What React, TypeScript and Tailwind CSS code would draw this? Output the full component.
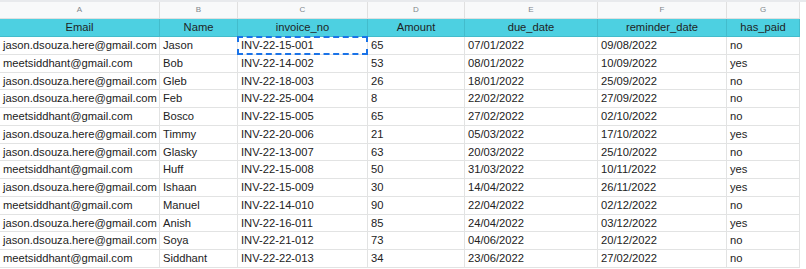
const columns = [
  { letter: 'A', title: 'Email' },
  { letter: 'B', title: 'Name' },
  { letter: 'C', title: 'invoice_no' },
  { letter: 'D', title: 'Amount' },
  { letter: 'E', title: 'due_date' },
  { letter: 'F', title: 'reminder_date' },
  { letter: 'G', title: 'has_paid' },
];

const rows = [
  ['jason.dsouza.here@gmail.com', 'Jason', 'INV-22-15-001', '65', '07/01/2022', '09/08/2022', 'no'],
  ['meetsiddhant@gmail.com', 'Bob', 'INV-22-14-002', '53', '08/01/2022', '10/09/2022', 'yes'],
  ['jason.dsouza.here@gmail.com', 'Gleb', 'INV-22-18-003', '26', '18/01/2022', '25/09/2022', 'no'],
  ['jason.dsouza.here@gmail.com', 'Feb', 'INV-22-25-004', '8', '22/02/2022', '27/09/2022', 'no'],
  ['meetsiddhant@gmail.com', 'Bosco', 'INV-22-15-005', '65', '27/02/2022', '02/10/2022', 'no'],
  ['jason.dsouza.here@gmail.com', 'Timmy', 'INV-22-20-006', '21', '05/03/2022', '17/10/2022', 'yes'],
  ['jason.dsouza.here@gmail.com', 'Glasky', 'INV-22-13-007', '63', '20/03/2022', '25/10/2022', 'no'],
  ['meetsiddhant@gmail.com', 'Huff', 'INV-22-15-008', '50', '31/03/2022', '10/11/2022', 'yes'],
  ['jason.dsouza.here@gmail.com', 'Ishaan', 'INV-22-15-009', '30', '14/04/2022', '26/11/2022', 'yes'],
  ['meetsiddhant@gmail.com', 'Manuel', 'INV-22-14-010', '90', '22/04/2022', '02/12/2022', 'no'],
  ['jason.dsouza.here@gmail.com', 'Anish', 'INV-22-16-011', '85', '24/04/2022', '03/12/2022', 'yes'],
  ['jason.dsouza.here@gmail.com', 'Soya', 'INV-22-21-012', '73', '04/06/2022', '20/12/2022', 'no'],
  ['meetsiddhant@gmail.com', 'Siddhant', 'INV-22-22-013', '34', '23/06/2022', '27/02/2022', 'no'],
];

const grid = 'grid grid-cols-[160px_78px_130px_97px_133px_129px_73px] w-[800px]';

export default function App() {
  return (
    <div className="w-[806px] h-[269px] overflow-hidden bg-white font-['Liberation_Sans',Arial,sans-serif] text-[#222]">
      <div className="h-[2px] bg-[#e8eaed]" />

      {/* column letters */}
      <div className={`${grid} h-[17px] bg-[#f8f9fa]`}>
        {columns.map((c) => (
          <div
            key={c.letter}
            className="flex items-center justify-center border-r border-b border-[#e0e0e0] text-[8px] text-[#80868b]"
          >
            {c.letter}
          </div>
        ))}
      </div>

      {/* header row */}
      <div className={`${grid} h-[18px] bg-[#4dd0e1]`}>
        {columns.map((c) => (
          <div
            key={c.title}
            className="flex items-center justify-center border-r border-b border-[#43bccc] text-[11.2px] text-[#1f1f1f]"
          >
            {c.title}
          </div>
        ))}
      </div>

      {rows.map((row, i) => (
        <div key={i} className={`${grid} h-[17.77px]`}>
          {row.map((cell, j) => (
            <div
              key={j}
              className="relative flex items-center pl-[3px] border-r border-b border-[#e2e3e3] text-[11.2px] whitespace-nowrap overflow-visible"
            >
              {cell}
              {i === 0 && j === 2 && (
                <div className="absolute -left-px -top-px -right-px -bottom-px border-2 border-dashed border-[#1a73e8]" />
              )}
            </div>
          ))}
        </div>
      ))}
    </div>
  );
}
